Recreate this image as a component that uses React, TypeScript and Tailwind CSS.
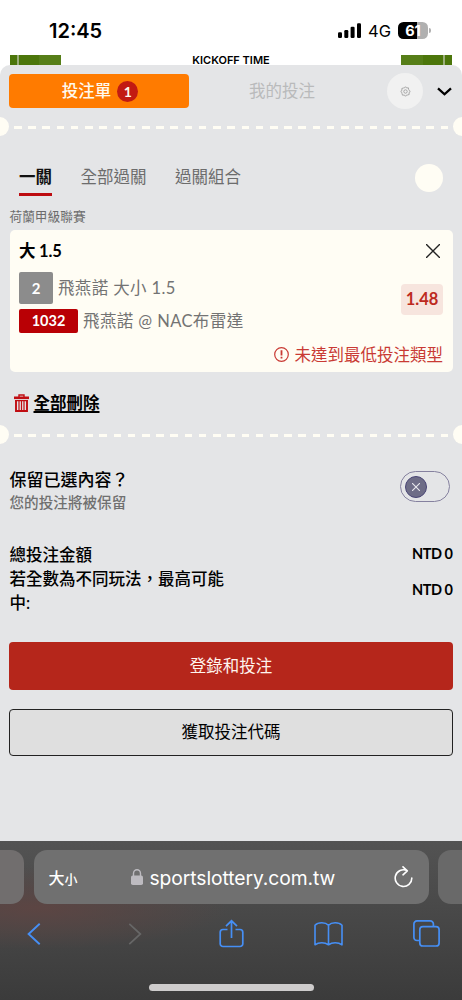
import type { ReactNode } from "react";

const Perforation = () => (
  <div className="relative flex h-[19px] items-center overflow-hidden">
    <span className="absolute -left-[10px] h-[19px] w-[19px] rounded-full bg-[#fffdf4]" />
    <div className="mx-[14px] mt-[1.5px] h-[3px] w-[434px] bg-[repeating-linear-gradient(90deg,#fffdf4_0_7.6px,transparent_7.6px_14.22px)]" />
    <span className="absolute -right-[10px] h-[19px] w-[19px] rounded-full bg-[#fffdf4]" />
  </div>
);

const StatusBar = () => (
  <div className="flex h-[55px] items-start bg-white pt-[18px] font-['Inter',sans-serif] text-black">
    <div className="ml-[49px] w-[53px] whitespace-nowrap text-[20px] font-semibold leading-[26px]">
      12:45
    </div>
    <svg className="ml-[236px] mt-[5px] h-[16px] w-[23px]" viewBox="0 0 23 16">
      <rect x="0" y="9.3" width="4" height="5.7" rx="1.2" />
      <rect x="6.3" y="7" width="4" height="8" rx="1.2" />
      <rect x="12.6" y="3.7" width="4" height="11.3" rx="1.2" />
      <rect x="19" y="0.3" width="4" height="14.7" rx="1.2" />
    </svg>
    <div className="ml-[7px] w-[23px] text-[16.5px] leading-[27px]">4G</div>
    <div className="ml-[7px] mt-[4px] flex h-[17px] w-[30px] items-center justify-center rounded-[5.5px] bg-[linear-gradient(90deg,#000_62%,#b0b0b0_62%)] pt-px text-[14.5px] font-bold leading-none text-white">
      61
    </div>
    <span className="ml-[1px] mt-[10px] h-[5px] w-[2px] rounded-r-full bg-[#b0b0b0]" />
  </div>
);

const GearIcon = () => (
  <svg className="h-[11px] w-[11px]" viewBox="0 0 24 24" fill="none" stroke="#9c9c9c" strokeWidth="1.9" strokeLinejoin="round">
    <path d="M9.6 4.3 Q12 -1.2 14.4 4.3 Q20 2 18.9 7.6 Q20.3 9 19.7 9.6 Q25.2 12 19.7 14.4 Q22 20 16.4 19.7 Q14.4 19 14.4 19.7 Q12 25.2 9.6 19.7 Q4 22 4.3 16.4 Q5 14.4 4.3 14.4 Q-1.2 12 4.3 9.6 Q2 4 7.6 4.3 Q9 5 9.6 4.3 Z" />
    <circle cx="12" cy="12" r="3.7" />
  </svg>
);

const TrashIcon = () => (
  <svg className="h-[18px] w-[15px]" viewBox="0 0 15 18" fill="none" stroke="#c00d12">
    <path d="M0 3.8h15" strokeWidth="2.6" />
    <path d="M5 3V1h5v2" strokeWidth="1.4" />
    <path d="M2 6v11h11V6" strokeWidth="1.9" />
    <path d="M1.2 6.6h12.6M5 7v9M7.5 7v9M10 7v9" strokeWidth="1.2" />
  </svg>
);

interface TotalRowProps {
  label: ReactNode;
  value: string;
}

const TotalRow = ({ label, value }: TotalRowProps) => (
  <div className="flex items-center justify-between font-medium text-black">
    <div className="w-[226px] pt-px text-[16.5px] leading-[24px] -mb-px">{label}</div>
    <div className="text-[14.5px] font-bold leading-[24px] tracking-[-0.45px]">{value}</div>
  </div>
);

const BetCard = () => (
  <div className="mx-[9.5px] flex h-[142px] flex-col rounded-[5px] bg-[#fffdf4] px-[9.5px]">
    <div className="flex h-[42px] items-center justify-between">
      <div className="text-[16.5px] font-bold tracking-[-0.2px] text-black">大 1.5</div>
      <svg className="mr-[3px] h-[14px] w-[14px]" viewBox="0 0 14 14" stroke="#222" strokeWidth="1.4">
        <path d="M0 0l14 14M14 0L0 14" />
      </svg>
    </div>
    <div className="flex items-start justify-between text-[#737373]">
      <div className="flex flex-col gap-[4.5px]">
        <div className="flex items-center gap-[5px]">
          <span className="flex h-[32px] w-[34px] items-center justify-center rounded-[2px] bg-[#8c8c8c] text-[15px] font-bold text-white">
            2
          </span>
          <span className="text-[16.5px] leading-[24px] tracking-[0.37px]">飛燕諾 大小 1.5</span>
        </div>
        <div className="flex items-center gap-[5px]">
          <span className="flex h-[24px] w-[59px] items-center justify-center rounded-[2px] bg-[#b90005] text-[14.5px] font-bold text-white">
            1032
          </span>
          <span className="text-[16.5px] leading-[24px] tracking-[0.4px]">飛燕諾 @ NAC布雷達</span>
        </div>
      </div>
      <div className="mt-[12px] flex h-[31px] w-[42px] items-center justify-center rounded-[4px] bg-[#f7e5de] text-[16.5px] font-bold text-[#bd2a20]">
        1.48
      </div>
    </div>
    <div className="mt-[10px] flex items-center justify-end gap-[6px] text-[16.5px] leading-[24px] text-[#c93a34]">
      <svg className="-mt-px h-[15px] w-[15px]" viewBox="0 0 15 15" fill="none" stroke="currentColor">
        <circle cx="7.5" cy="7.5" r="6.8" strokeWidth="1.2" />
        <path d="M7.5 3.3v5.2M7.5 9.8v1.8" strokeWidth="1.8" />
      </svg>
      <span>未達到最低投注類型</span>
    </div>
  </div>
);

const BrowserBar = () => (
  <div className="h-[159px] bg-[radial-gradient(ellipse_at_8%_42%,#5c4543_0%,transparent_32%),linear-gradient(#535353,#3b3b3b)] pt-[9px] font-['Inter','Noto_Sans_CJK_TC',sans-serif]">
    <div className="flex h-[54px] gap-[9.5px]">
      <div className="w-[24px] shrink-0 rounded-r-[13px] bg-[#716e6e]" />
      <div className="flex w-[395px] shrink-0 items-center rounded-[13px] bg-[#707070] text-white">
        <div className="ml-[15px] mt-[2px] flex w-[30px] items-baseline font-medium">
          <span className="text-[16px]">大</span>
          <span className="text-[13px]">小</span>
        </div>
        <svg className="ml-[52px] h-[16px] w-[12px]" viewBox="0 0 12 16">
          <rect x="0" y="6.5" width="12" height="9.5" rx="1.8" fill="#bdbbc0" />
          <path d="M2.5 7V4.5a3.5 3.8 0 0 1 7 0V7" fill="none" stroke="#bdbbc0" strokeWidth="1.4" />
        </svg>
        <div className="ml-[7px] mt-[2px] w-[187px] whitespace-nowrap text-[19.3px] tracking-[-0.08px]">sportslottery.com.tw</div>
        <svg className="ml-[57px] h-[22px] w-[19px]" viewBox="0 0 19 22" fill="none" stroke="#fff" strokeWidth="1.6" strokeLinecap="round" strokeLinejoin="round">
          <path d="M17.8 12A8.3 8.3 0 1 1 13 4.6M9 .8l4.3 4-4.3 4" />
        </svg>
      </div>
      <div className="w-[24px] shrink-0 rounded-l-[13px] bg-[#696969]" />
    </div>
    <div className="flex h-[59px] items-center text-[#468ff5]">
      <svg className="ml-[27px] h-[22px] w-[14px]" viewBox="0 0 14 22" fill="none" stroke="currentColor" strokeWidth="1.9">
        <path d="M12.7.8L1.6 11l11.1 10.2" />
      </svg>
      <svg className="ml-[87px] h-[22px] w-[14px]" viewBox="0 0 14 22" fill="none" stroke="#676767" strokeWidth="1.7">
        <path d="M1.3.8L12.4 11 1.3 21.2" />
      </svg>
      <svg className="ml-[77px] h-[30px] w-[25px]" viewBox="0 0 25 30" fill="none" stroke="currentColor" strokeWidth="1.7">
        <path d="M8.5 10.5H4a2.8 2.8 0 0 0-2.8 2.8v11.4A2.8 2.8 0 0 0 4 27.5h17a2.8 2.8 0 0 0 2.8-2.8V13.3A2.8 2.8 0 0 0 21 10.5h-4.5M12.5 19V2M7 7.2l5.5-5.4L18 7.2" />
      </svg>
      <svg className="ml-[70px] h-[24px] w-[29px]" viewBox="0 0 29 24" fill="none" stroke="currentColor" strokeWidth="1.6" strokeLinejoin="round">
        <path d="M14.5 3.2C11.5.1 4.2-.1 1 3.3V22.8c3.8-2.7 9.8-2.7 13.5 0c3.7-2.7 9.7-2.7 13.5 0V3.3C24.8-.1 17.5.1 14.5 3.2zV22.8" />
      </svg>
      <svg className="ml-[70px] h-[27px] w-[27px]" viewBox="0 0 27 27" fill="none" stroke="currentColor" strokeWidth="1.7">
        <path d="M6.8 20.5H4A3.1 3.1 0 0 1 .9 17.4V4A3.1 3.1 0 0 1 4 .9h13.3A3.1 3.1 0 0 1 20.4 4v2.7" />
        <rect x="6.8" y="6.7" width="19.3" height="19.3" rx="3.1" />
      </svg>
    </div>
    <div className="mx-auto mt-[21px] h-[6.5px] w-[165px] rounded-full bg-[#cecccc]" />
  </div>
);

export default function App() {
  return (
    <div className="flex h-[1000px] w-[462px] flex-col overflow-hidden bg-white font-['Lato','Noto_Sans_CJK_TC',sans-serif]">
      <StatusBar />
      <div className="flex h-[10px] items-start justify-between px-[9.5px]">
        <div className="h-[10px] w-[51px] bg-[linear-gradient(90deg,#4c760b_7px,#9bae7c_7px_9px,#4c760b_9px_29px,#567e18_29px)]" />
        <div className="font-['Inter',sans-serif] text-[11px] font-semibold leading-[10px] text-black">KICKOFF TIME</div>
        <div className="h-[10px] w-[51px] bg-[linear-gradient(90deg,#567e18_22px,#4c760b_22px_42px,#9bae7c_42px_44px,#4c760b_44px)]" />
      </div>

      <div className="flex h-[776px] flex-col rounded-t-[10px] bg-[#e4e5e7]">
        {/* вкладки купона */}
        <div className="flex h-[52px] items-center">
          <div className="ml-[9px] flex h-[34px] w-[180px] items-center justify-center gap-[6px] rounded-[4px] bg-[#ff7b00] pl-[2px] text-[16.5px] text-[#fff9ed]">
            <span className="font-medium">投注單</span>
            <span className="flex h-[21px] w-[21px] items-center justify-center rounded-full bg-[#c21a12] text-[14px] font-bold">
              1
            </span>
          </div>
          <div className="ml-[60px] w-[66px] pt-px text-[16.5px] text-[#b9babb]">我的投注</div>
          <div className="ml-[72px] flex h-[36px] w-[36px] items-center justify-center rounded-full bg-[#f1f1f1]">
            <GearIcon />
          </div>
          <svg className="ml-[14px] h-[9px] w-[15px]" viewBox="0 0 15 9" fill="none" stroke="#000" strokeWidth="2.3">
            <path d="M1 1.3l6.5 6 6.5-6" />
          </svg>
        </div>

        <Perforation />

        <div className="flex h-[71px] items-start justify-between pl-[19px] pr-[19px] pt-[28px]">
          <div className="flex gap-[28.5px] text-[16.5px] leading-[26px] text-[#6c6c6c]">
            <div className="h-[32px] border-b-[3.5px] border-[#bd0c11] font-bold text-[#111]">一關</div>
            <div>全部過關</div>
            <div>過關組合</div>
          </div>
          <span className="h-[28px] w-[28px] rounded-full bg-[#fffdf4]" />
        </div>
        <div className="-mt-px h-[24px] pl-[9.5px] text-[12.7px] leading-[20px] text-[#6c6c6c]">荷蘭甲級聯賽</div>

        <BetCard />

        <div className="flex h-[53px] items-center gap-[4.5px] pl-[14px] pt-[8px]">
          <TrashIcon />
          <span className="text-[16.5px] font-bold leading-[24px] text-black underline decoration-[1.5px] underline-offset-[2px]">
            全部刪除
          </span>
        </div>

        <Perforation />

        <div className="mt-[24px] flex items-start justify-between pl-[9.5px] pr-[12px]">
          <div>
            <div className="text-[17px] font-medium leading-[24px] text-black">保留已選內容？</div>
            <div className="text-[14.6px] font-medium leading-[21px] text-[#707070]">您的投注將被保留</div>
          </div>
          <div className="mt-[3px] flex h-[31px] w-[50px] items-center rounded-full border border-[#85819f] pl-[4px]">
            <span className="flex h-[22px] w-[22px] items-center justify-center rounded-full border border-[#494575] bg-[#6e6d87]">
              <svg className="h-[8px] w-[8px]" viewBox="0 0 8 8" stroke="#e8e8ee" strokeWidth="1.1">
                <path d="M0 0l8 8M8 0L0 8" />
              </svg>
            </span>
          </div>
        </div>

        <div className="mt-[29px] px-[9.5px]">
          <TotalRow label="總投注金額" value="NTD 0" />
          <TotalRow label={<>若全數為不同玩法，最高可能<br />中:</>} value="NTD 0" />
        </div>

        <div className="mt-[28px] flex flex-col gap-[19px] px-[9px] text-[16.5px]">
          <button className="h-[47.5px] rounded-[4px] bg-[#b5261b] pt-[2px] text-[#fff5ef]">登錄和投注</button>
          <button className="h-[47.5px] rounded-[4px] border border-[#222] bg-[#dfdfdf] pt-px text-black">獲取投注代碼</button>
        </div>
      </div>

      <BrowserBar />
    </div>
  );
}
